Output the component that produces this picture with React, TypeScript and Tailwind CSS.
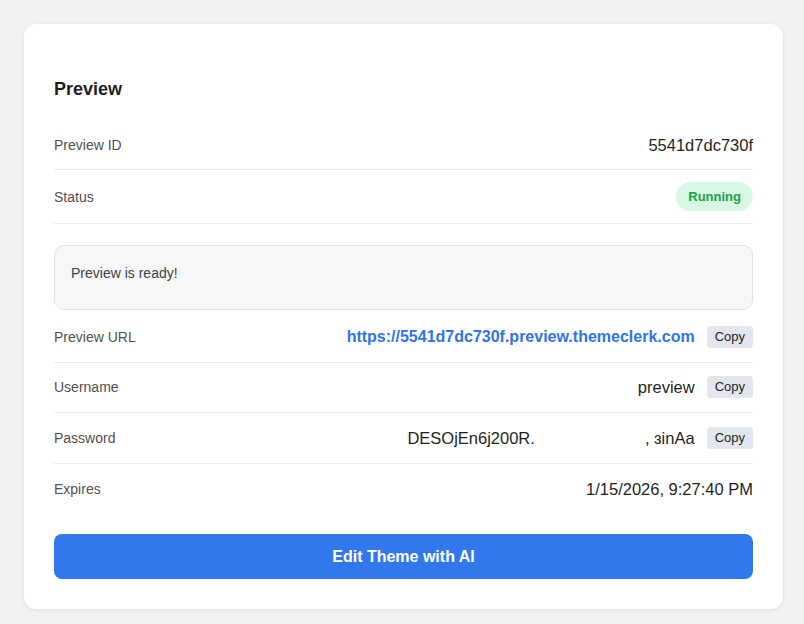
import React from 'react';

const Row: React.FC<{ label: string; children: React.ReactNode; last?: boolean }> = ({ label, children, last }) => (
  <div className={`flex items-center justify-between py-3 min-h-[50.5px] ${last ? '' : 'border-b border-[#ebebeb]'}`}>
    <span className="text-[14px] leading-6 text-[#505050]">{label}</span>
    <div className="flex items-center gap-3">{children}</div>
  </div>
);

const CopyButton: React.FC = () => (
  <button className="h-[22px] px-2 rounded bg-[#e2e6ee] text-[13px] leading-[22px] text-[#1f1f1f]">Copy</button>
);

export default function App() {
  return (
    <div className="min-h-screen bg-[#f2f2f2] p-6 font-['Liberation_Sans',Arial,sans-serif]">
      <div className="w-[759px] bg-white rounded-xl shadow-[0_1px_4px_rgba(0,0,0,0.08)] px-[30px] pt-[51px] pb-[30px]">
        <h2 className="text-[18px] leading-7 font-bold text-[#1f1f1f] mb-[18px]">Preview</h2>

        <div className="flex items-center justify-between py-3 border-b border-[#ebebeb]">
          <span className="text-[14px] leading-6 text-[#505050]">Preview ID</span>
          <span className="text-[16.5px] leading-6 text-[#1f1f1f]">5541d7dc730f</span>
        </div>

        <div className="flex items-center justify-between py-3 border-b border-[#ebebeb]">
          <span className="text-[14px] leading-6 text-[#505050]">Status</span>
          <span className="h-[29px] px-3 rounded-full bg-[#d9f8e3] text-[#17a34a] text-[13px] font-bold leading-[29px]">Running</span>
        </div>

        <div className="mt-[21px] mb-[2px] h-[65px] rounded-[10px] border border-[#dfe3e8] bg-[#f6f7f9] px-4 pt-[17px]">
          <p className="text-[14px] leading-5 text-[#3f3f3f]">Preview is ready!</p>
        </div>

        <Row label="Preview URL">
          <a className="text-[16px] leading-6 font-bold text-[#2f74e6]" href="#">https://5541d7dc730f.preview.themeclerk.com</a>
          <CopyButton />
        </Row>
        <Row label="Username">
          <span className="text-[16.5px] leading-6 text-[#1f1f1f]">preview</span>
          <CopyButton />
        </Row>
        <Row label="Password">
          <span className="text-[16.5px] leading-6 text-[#1f1f1f] whitespace-nowrap">
            DESOjEn6j200R.<span className="inline-block w-[110px]" />, ɜinAa
          </span>
          <CopyButton />
        </Row>
        <Row label="Expires" last>
          <span className="text-[16.5px] leading-6 text-[#1f1f1f]">1/15/2026, 9:27:40 PM</span>
        </Row>

        <button className="mt-5 w-full h-[45px] rounded-lg bg-[#3178ef] text-white text-[16px] font-bold">
          Edit Theme with AI
        </button>
      </div>
    </div>
  );
}
